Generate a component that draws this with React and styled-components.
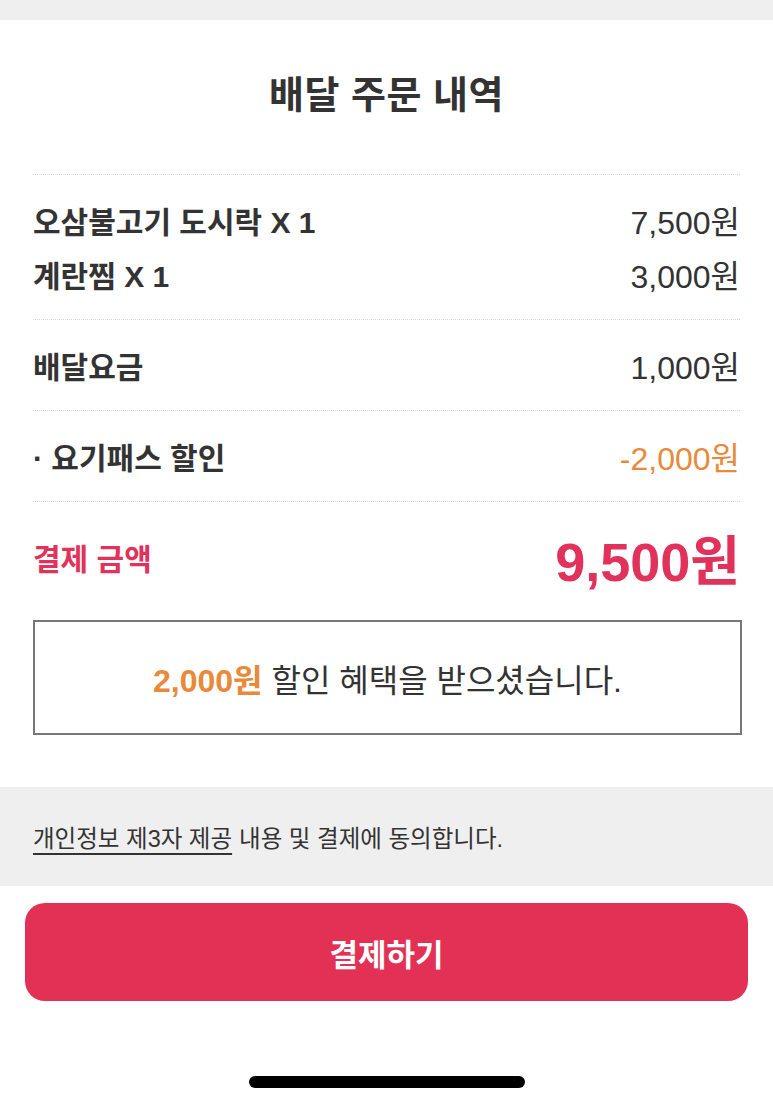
import React from 'react';
import styled, { createGlobalStyle } from 'styled-components';

const GlobalStyle = createGlobalStyle`
  html, body {
    margin: 0;
    padding: 0;
    background: #fff;
  }

  body {
    font-family: 'Liberation Sans', 'Noto Sans CJK KR', sans-serif;
    color: #333;
  }
`;

const Page = styled.div`
  width: 773px;
  min-height: 1105px;
  display: flex;
  flex-direction: column;
  background: #fff;
`;

const TopBar = styled.div`
  height: 20px;
  background: #efefef;
`;

const Title = styled.h1`
  margin: 0;
  height: 154px;
  display: flex;
  align-items: center;
  justify-content: center;
  padding-bottom: 12px;
  box-sizing: border-box;

  font-size: 38px;
  font-weight: 700;
  color: #333;
  letter-spacing: 0.5px;
`;

const Content = styled.div`
  padding: 0 33px;
`;

const Section = styled.div`
  border-top: 1px dotted #d6d6d6;
  padding: 18px 0;
`;

const Row = styled.div`
  display: flex;
  align-items: center;
  justify-content: space-between;
  height: 54px;
`;

const Label = styled.div`
  font-size: 30px;
  font-weight: 600;
  color: #333;
`;

const Price = styled.div`
  font-size: 32px;
  font-weight: 400;
  color: ${(p) => (p.$accent ? '#e88a3a' : '#333')};
`;

const TotalSection = styled.div`
  border-top: 1px dotted #d6d6d6;
  padding-top: 25px;
`;

const TotalRow = styled.div`
  display: flex;
  align-items: center;
  justify-content: space-between;
  height: 60px;
`;

const TotalLabel = styled.div`
  font-size: 30px;
  font-weight: 700;
  color: #e0325a;
`;

const TotalPrice = styled.div`
  font-size: 54px;
  font-weight: 700;
  color: #e0325a;
`;

const BenefitBox = styled.div`
  margin-top: 33px;
  height: 115px;
  box-sizing: border-box;
  border: 2px solid #777;
  display: flex;
  align-items: center;
  justify-content: center;

  font-size: 32px;
  font-weight: 400;
  color: #333;
  margin-right: -2px;
`;

const Highlight = styled.span`
  color: #e88a3a;
  font-weight: 600;
  margin-right: 9px;
`;

const AgreeBar = styled.div`
  margin-top: 52px;
  height: 99px;
  background: #efefef;
  display: flex;
  align-items: center;
  padding: 0 33px;

  font-size: 23.5px;
  color: #333;
`;

const Underlined = styled.span`
  text-decoration: underline;
  text-underline-offset: 6px;
  text-decoration-thickness: 2px;
  margin-right: 7px;
`;

const ButtonWrap = styled.div`
  padding: 17px 25px 0;
`;

const PayButton = styled.button`
  width: 100%;
  height: 98px;
  border: none;
  border-radius: 20px;
  background: #e33155;
  color: #fff;
  font-family: inherit;
  font-size: 31px;
  font-weight: 700;
  cursor: pointer;
`;

const HomeIndicator = styled.div`
  align-self: center;
  margin-top: 75px;
  width: 276px;
  height: 12px;
  border-radius: 6px;
  background: #000;
`;

const items = [
  { name: '오삼불고기 도시락 X 1', price: '7,500원' },
  { name: '계란찜 X 1', price: '3,000원' },
];

const App = () => {
  return (
    <>
      <GlobalStyle />
      <Page>
        <TopBar />
        <Title>배달 주문 내역</Title>

        <Content>
          <Section>
            {items.map((item) => (
              <Row key={item.name}>
                <Label>{item.name}</Label>
                <Price>{item.price}</Price>
              </Row>
            ))}
          </Section>

          <Section>
            <Row>
              <Label>배달요금</Label>
              <Price>1,000원</Price>
            </Row>
          </Section>

          <Section>
            <Row>
              <Label>· 요기패스 할인</Label>
              <Price $accent>-2,000원</Price>
            </Row>
          </Section>

          <TotalSection>
            <TotalRow>
              <TotalLabel>결제 금액</TotalLabel>
              <TotalPrice>9,500원</TotalPrice>
            </TotalRow>
          </TotalSection>

          <BenefitBox>
            <Highlight>2,000원</Highlight>할인 혜택을 받으셨습니다.
          </BenefitBox>
        </Content>

        <AgreeBar>
          <Underlined>개인정보 제3자 제공</Underlined>내용 및 결제에 동의합니다.
        </AgreeBar>

        <ButtonWrap>
          <PayButton>결제하기</PayButton>
        </ButtonWrap>

        <HomeIndicator />
      </Page>
    </>
  );
};

export default App;
